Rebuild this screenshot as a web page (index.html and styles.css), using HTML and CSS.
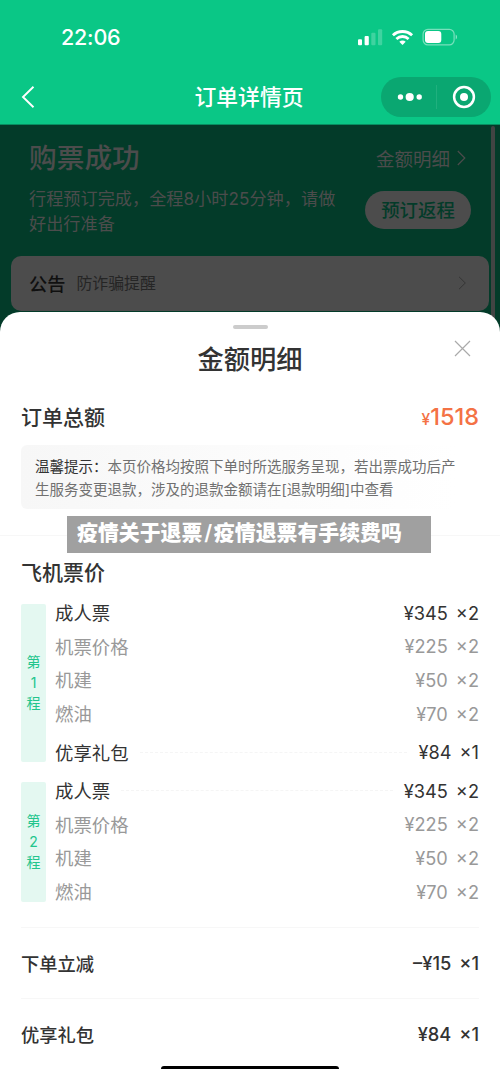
FILE: index.html
```html
<!DOCTYPE html>
<html lang="zh-CN">
<head>
<meta charset="utf-8">
<title>订单详情页</title>
<link rel="stylesheet" href="styles.css">
</head>
<body>
<div class="phone">
  <header class="top">
    <div class="status">
      <span class="time">22:06</span>
      <svg class="status-icons" width="102" height="20" viewBox="0 0 102 20">
        <g fill="#fff">
          <rect x="1" y="12.2" width="4" height="6" rx="1"/>
          <rect x="7.6" y="9" width="4.2" height="9.2" rx="1"/>
          <rect x="14.3" y="5.8" width="4.2" height="12.4" rx="1" opacity=".22"/>
          <rect x="21" y="2.2" width="4.2" height="16" rx="1" opacity=".22"/>
          <rect x="68" y="4.1" width="16.3" height="12" rx="3"/>
          <path d="M98.7 7.4v5c1.8-.8 1.8-4.2 0-5z" opacity=".5"/>
          <path d="M45.500 18l-3.200-3.200c1.800-1.600 4.600-1.600 6.400 0z"/>
        </g>
        <g fill="none" stroke="#fff" stroke-width="2.800">
          <path d="M35.900 8.300c5.400-5.100 13.800-5.100 19.200 0"/>
          <path d="M39.400 11.900c3.400-3.200 8.800-3.200 12.200 0"/>
        </g>
        <rect x="66.100" y="2.300" width="31" height="15.600" rx="4.800" fill="none" stroke="#fff" stroke-width="1.200" opacity=".45"/>
      </svg>
    </div>
    <div class="nav">
      <svg class="back" width="14" height="24" viewBox="0 0 14 24"><path d="M12.500 1.800L2 12l10.500 10.200" fill="none" stroke="#fff" stroke-width="1.900"/></svg>
      <h1 class="nav-title">订单详情页</h1>
      <div class="capsule">
        <svg width="26" height="12" viewBox="0 0 26 12" fill="#fff"><circle cx="3.500" cy="6" r="2.700"/><circle cx="12.700" cy="6" r="4.100"/><circle cx="22.200" cy="6" r="2.700"/></svg>
        <i class="capsule-line"></i>
        <svg width="24" height="24" viewBox="0 0 24 24"><circle cx="12" cy="12" r="9.900" fill="none" stroke="#fff" stroke-width="2.500"/><circle cx="12" cy="12" r="4" fill="#fff"/></svg>
      </div>
    </div>
  </header>
  <section class="page">
    <div class="summary">
      <div class="summary-text">
        <h2>购票成功</h2>
        <p>行程预订完成，全程8小时25分钟，请做<br>好出行准备</p>
      </div>
      <div class="summary-side">
        <span class="detail-link">金额明细<svg width="9" height="16" viewBox="0 0 9 16"><path d="M.8 1l7 7-7 7" fill="none" stroke="#4c4c4c" stroke-width="1.200"/></svg></span>
        <span class="pill">预订返程</span>
      </div>
    </div>
    <div class="notice">
      <b>公告</b><span>防诈骗提醒</span>
      <svg width="9" height="14" viewBox="0 0 9 14"><path d="M1 .8L7.300 7 1 13.200" fill="none" stroke="#353535" stroke-width="1"/></svg>
    </div>
    <i class="scrollbar"></i>
  </section>
  <main class="sheet">
    <div class="handle-row"><i class="handle"></i></div>
    <div class="sheet-head">
      <h2>金额明细</h2>
      <svg class="close" width="17" height="17" viewBox="0 0 17 17"><path d="M1 1l15 15M16 1L1 16" fill="none" stroke="#aaa" stroke-width="1.200"/></svg>
    </div>
    <div class="total"><h3>订单总额</h3><span class="amount"><small>¥</small>1518</span></div>
    <div class="tip"><b>温馨提示：</b>本页价格均按照下单时所选服务呈现，若出票成功后产<br>生服务变更退款，涉及的退款金额请在[退款明细]中查看</div>
    <hr class="rule-full">
    <h3 class="fare-title">飞机票价</h3>
    <div class="leg leg-first">
      <div class="leg-tag"><span>第</span><span>1</span><span>程</span></div>
      <div class="rows">
        <div class="row"><span>成人票</span><span>¥345 <em>×2</em></span></div>
        <div class="row sub"><span>机票价格</span><span>¥225 <em>×2</em></span></div>
        <div class="row sub"><span>机建</span><span>¥50 <em>×2</em></span></div>
        <div class="row sub"><span>燃油</span><span>¥70 <em>×2</em></span></div>
        <div class="row gift"><span>优享礼包</span><i class="leader"></i><span>¥84 <em>×1</em></span></div>
      </div>
    </div>
    <div class="leg leg-second">
      <div class="leg-tag"><span>第</span><span>2</span><span>程</span></div>
      <div class="rows">
        <div class="row"><span>成人票</span><i class="leader"></i><span>¥345 <em>×2</em></span></div>
        <div class="row sub"><span>机票价格</span><span>¥225 <em>×2</em></span></div>
        <div class="row sub"><span>机建</span><span>¥50 <em>×2</em></span></div>
        <div class="row sub"><span>燃油</span><span>¥70 <em>×2</em></span></div>
      </div>
    </div>
    <div class="extra"><span>下单立减</span><span>–¥15 <em>×1</em></span></div>
    <div class="extra"><span>优享礼包</span><span>¥84 <em>×1</em></span></div>
  </main>
  <div class="caption">疫情关于退票<span>/</span>疫情退票有手续费吗</div>
  <i class="home-bar"></i>
</div>
</body>
</html>
```

FILE: styles.css
```css
* { box-sizing: border-box; margin: 0; padding: 0; }
body { background: #fff; font-family: Inter, "Noto Sans CJK SC", sans-serif; color: #333; }
svg { display: block; flex: none; }
em, i { font-style: normal; }
.phone { position: relative; width: 500px; height: 1069px; overflow: hidden; background: #033b29; }

.top { height: 125px; background: #0ac786; color: #fff; border-bottom: 1px solid #078e60; }
.status { display: flex; justify-content: space-between; height: 69px; padding: 22px 41px 0 61px; }
.time { font-size: 21.500px; font-weight: 500; line-height: 30px; letter-spacing: -.2px; }
.status-icons { margin-top: 5px; }
.nav { display: grid; grid-template-columns: 119px 1fr 119px; align-items: center; height: 56px; }
.back { margin-left: 21px; }
.nav-title { margin-left: -2px; font-size: 21.800px; font-weight: 500; line-height: 30px; text-align: center; white-space: nowrap; }
.capsule { display: flex; align-items: center; height: 40px; width: 110px; padding: 0 15px 0 16px; border-radius: 20px; background: #0aa771; }
.capsule-line { width: 1px; height: 24px; margin: 0 15px 0 13px; background: #20b07e; }

.page { position: relative; height: 187px; background: #033b29; color: #4c4c4c; }
.summary { display: flex; justify-content: space-between; height: 131px; padding: 13px 29px 0 29px; }
.summary h2 { font-size: 27.700px; font-weight: 500; line-height: 40px; }
.summary p { margin-top: 8px; font-size: 17.150px; line-height: 25px; letter-spacing: .03px; white-space: nowrap; }
.summary-side { display: flex; flex-direction: column; align-items: flex-end; }
.detail-link { display: flex; align-items: center; gap: 7px; height: 39px; padding-right: 5px; font-size: 18.500px; }
.pill { width: 106px; height: 38px; margin-top: 14px; border-radius: 19px; background: #4c4c4c; color: #033b29; font-size: 18.400px; font-weight: 500; line-height: 38px; text-align: center; }
.notice { display: flex; align-items: center; height: 55px; margin: 0 11px; padding: 0 22px 1px 18px; border-radius: 10px; background: #4c4c4c; color: #252525; }
.notice b { margin-right: 11px; color: #101010; font-size: 18.200px; font-weight: 500; }
.notice span { flex: 1; margin-top: -1px; font-size: 15.900px; }
.scrollbar { position: absolute; top: 1px; right: 5px; width: 4px; height: 200px; border-radius: 2px; background: #414443; }

.sheet { position: relative; height: 777px; padding: 13px 21px 0; border-radius: 20px 20px 0 0; background: #fff; }
.handle-row { display: flex; justify-content: center; height: 14px; }
.handle { width: 35px; height: 4px; border-radius: 2px; background: #ccc; }
.sheet-head { display: grid; grid-template-columns: 30px 1fr 30px; height: 40px; text-align: center; }
.sheet-head h2 { grid-column: 2; font-size: 26.300px; font-weight: 500; line-height: 41px; }
.close { justify-self: end; margin: 1px 8px 0 0; }
.total { display: flex; justify-content: space-between; align-items: center; height: 76px; }
h3 { font-size: 21px; font-weight: 500; line-height: 30px; }
.total h3 { padding-top: 2px; }
.amount { padding-bottom: 1px; color: #f47245; font-size: 23.500px; font-weight: 500; }
.amount small { font-size: 15.500px; }
.tip { width: 458px; height: 64px; margin-top: -10px; padding: 10px 0 0 14px; border-radius: 6px; background: linear-gradient(90deg, #f7f7f7, #fbfbfb 45%, #fff 95%); color: #707070; font-size: 14.500px; line-height: 23px; white-space: nowrap; }
.tip b { color: #333; font-weight: 400; }
.rule-full { height: 1px; margin: 26px -21px 0; border: 0; background: #f7f7f7; }
.fare-title { margin-top: 22px; }
.leg { display: flex; gap: 9px; }
.leg-first { height: 158px; margin-top: 16px; }
.leg-second { height: 120px; margin-top: 20px; }
.leg-tag { display: flex; flex-direction: column; align-items: center; justify-content: center; width: 25px; border-radius: 2px; background: #e4f8f1; color: #22c58c; font-size: 14px; line-height: 20.500px; }
.rows { flex: 1; margin-top: -8px; }
.row { display: flex; align-items: center; justify-content: space-between; height: 33.600px; color: #333; font-size: 18.400px; }
.row span:first-child { margin-top: -1px; }
.row span:last-child { font-size: 18.200px; }
.row span, .extra span { white-space: nowrap; }
.row em, .extra em { margin-left: 3px; }
.sub { color: #999; }
.gift { margin-top: 5px; }
.leader { flex: 1; margin: 0 11px; border-top: 1px dashed #f5f5f5; }
.extra { display: flex; align-items: center; justify-content: space-between; height: 71px; border-top: 1px solid #f7f7f7; font-size: 18.300px; font-weight: 500; }
.leg-second + .extra { margin-top: 25px; }

.caption { position: absolute; top: 516px; left: 67px; width: 364px; height: 37px; padding-left: 10px; background: #a0a0a0; color: #fff; font-size: 20.900px; font-weight: 900; line-height: 34px; white-space: nowrap; }
.caption span { display: inline-block; width: 11.500px; font-weight: 600; text-align: center; }
.home-bar { position: absolute; left: 161px; bottom: -3px; width: 178px; height: 6px; border-radius: 3px; background: #000; }
```
